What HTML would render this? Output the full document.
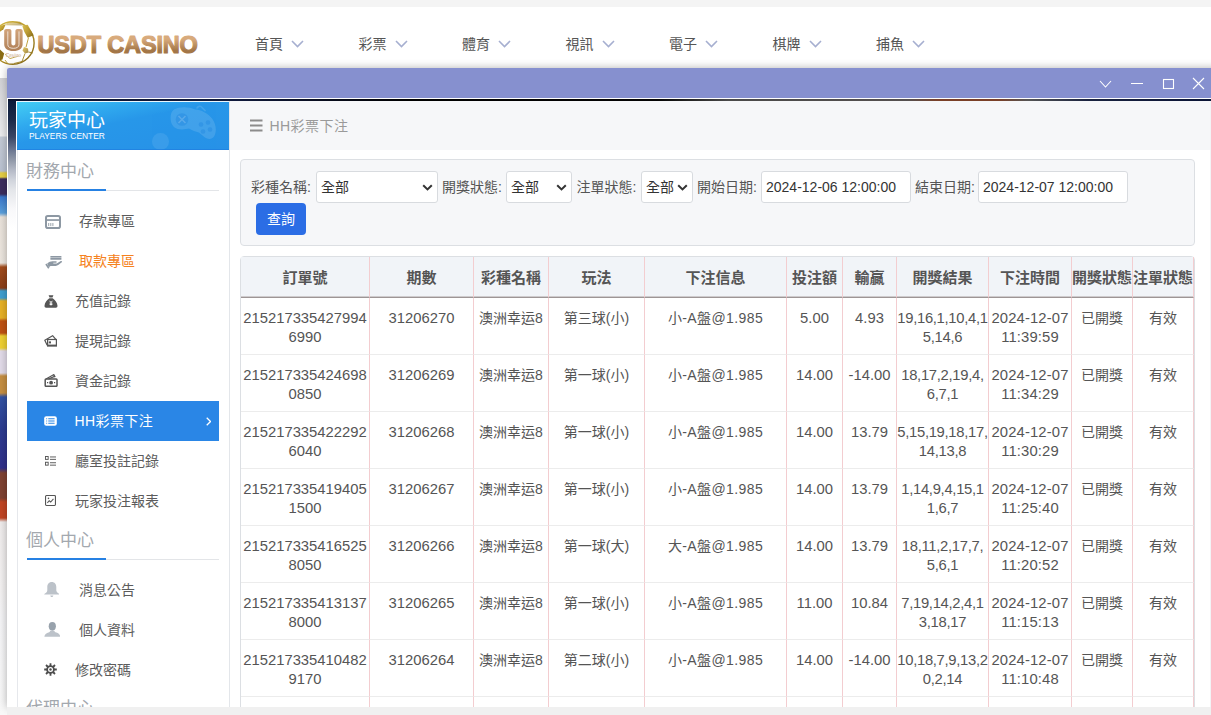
<!DOCTYPE html>
<html lang="zh-Hant">
<head>
<meta charset="utf-8">
<title>USDT CASINO</title>
<style>
*{box-sizing:border-box;margin:0;padding:0}
html,body{width:1211px;height:715px;overflow:hidden}
body{position:relative;background:#f4f4f4;font-family:"Liberation Sans","Noto Sans CJK TC",sans-serif;font-size:14px;color:#555}
/* ---------- page header ---------- */
#hdr{position:absolute;left:0;top:7px;width:1211px;height:71px;background:#fff}
#logo{position:absolute;left:-10px;top:13px;width:46px;height:46px}
#brand{position:absolute;left:36px;top:20px}
#nav{position:absolute;left:255px;top:26px;height:22px;white-space:nowrap}
#nav a{position:absolute;top:0;font-size:14px;line-height:22px;color:#555;text-decoration:none;white-space:nowrap}
#nav svg{position:absolute;left:36px;top:7px}
/* ---------- left page strip ---------- */
#strip{position:absolute;left:0;top:78px;width:8px;height:637px;
 background:linear-gradient(#d2d2d6 0px,#ececee 58px,#c4cad5 59px,#bac2d1 93px,#e6cf45 95px,#e6cf45 99px,#3c2d5e 101px,#3c2d5e 116px,#3b78cc 119px,#5aa0dc 135px,#e9e2da 139px,#ece6df 185px,#a34c1c 189px,#8a3e18 210px,#3f9fd0 213px,#3f9fd0 220px,#e7b125 223px,#e7b125 240px,#bf5213 243px,#bf5213 255px,#efd033 258px,#efd033 270px,#e2dbe9 273px,#e2dbe9 295px,#c68f42 298px,#c68f42 315px,#3353a4 319px,#2c3b90 352px,#31308a 390px,#7f4232 395px,#7f4232 420px,#c24523 424px,#c24523 440px,#efecec 444px,#f3f1f1 510px,#f4f4f6 540px,#f8f8f8 637px)}
/* ---------- modal ---------- */
#modal{position:absolute;left:7px;top:68px;width:1240px;height:639px;background:#fff;border-radius:2px 0 0 0;overflow:hidden;box-shadow:0 0 8px rgba(0,0,0,.3)}
#tbar{position:absolute;left:0;top:0;width:100%;height:30px;background:#8690cf}
#tbar svg{position:absolute;top:0;left:0}
#frame{position:absolute;left:1px;top:31px;width:1239px;height:608px;overflow:hidden;
 background:linear-gradient(#0b1a3a 0px,#1c2a4a 21px,#3a4664 38px,#6b7690 51px,#9098a8 61px,#b4b9c6 71px,#d0d4dc 81px,#e4e6ea 91px,#f8f8fa 110px,#fff 130px)}
#frame:before{content:"";position:absolute;left:0;top:0;width:1204px;height:2px;background:linear-gradient(90deg,#0b1430 0,#101a3c 230px,#000 400px,#050505 650px,#4a4a4a 720px,#555050 900px,#7a4028 930px,#7a4028 990px,#555 1020px,#1a2340 1080px,#0a1436 1203px)}
/* ---------- sidebar ---------- */
#side{position:absolute;left:8px;top:2px;width:214px;height:620px;background:#fff;border-left:1px solid #fff;border-right:1px solid #e3e6ea}
#side:after{content:"";position:absolute;left:0;top:49px;width:1px;height:571px;background:#e6e8ec}
#shead:after{content:"";position:absolute;left:0;bottom:0;width:100%;height:1px;background:#1f7de0;opacity:.7}
#shead{position:absolute;left:0;top:0;width:212px;height:49px;border-top:1px solid #e9f6fd;
 background:linear-gradient(168deg,#43cdf4 0%,#2fa8ee 28%,#2797e9 45%,#2791e7 100%);overflow:hidden}
#shead .t1{position:absolute;left:12px;top:7px;font-size:19px;line-height:24px;color:#fff;white-space:nowrap}
#shead .t2{position:absolute;left:12px;top:29px;font-size:8.400px;line-height:10px;color:#fff;white-space:nowrap;letter-spacing:0;word-spacing:1px}
.sec{position:absolute;left:9px;width:192px;height:40px}
.sec span{position:absolute;left:0;top:1px;font-size:17px;line-height:22px;color:#a3a8ae;white-space:nowrap}
.sec i{position:absolute;left:1px;top:30px;width:192px;height:1px;background:#e3e5e8}
.sec b{position:absolute;left:1px;top:29px;width:79px;height:2px;background:#2681e3}
.mi{position:absolute;left:10px;width:192px;height:40px;line-height:40px;font-size:14px;color:#5c5c5c;white-space:nowrap}
.mi span{position:absolute;left:48px;top:0}
.mi.w span{left:52px}
.mi svg{position:absolute}
.mi.act{background:#2a86e6;color:#fff}
.mi.act span{left:47.500px;letter-spacing:.4px}
.mi.or{color:#f58220}
/* ---------- main ---------- */
#main{position:absolute;left:222px;top:2px;width:1020px;height:620px;background:#fff}
#crumb{position:absolute;left:0;top:0;width:100%;height:49px;background:#f6f7f9}
#crumb span{position:absolute;left:39.500px;top:14px;font-size:14px;line-height:22px;color:#9a9a9a;white-space:nowrap;letter-spacing:.45px}
#crumb svg{position:absolute;left:20px;top:18px}
#filt{position:absolute;left:10px;top:58px;width:955px;height:87px;background:#f6f7f9;border:1px solid #dcdfe3;border-radius:4px}
#filt label{position:absolute;top:16px;font-size:14px;line-height:22px;color:#555;white-space:nowrap}
.sel,.inp{position:absolute;top:11px;height:32px;background:#fff;border:1px solid #d8dbdf;border-radius:3px;font-size:14px;line-height:30px;color:#333;padding-left:4px;white-space:nowrap}
.sel svg{position:absolute;right:4px;top:12px}
#btn{position:absolute;left:15px;top:43px;width:50px;height:32px;background:#2b6de5;border-radius:4px;color:#fff;font-size:14px;line-height:32px;text-align:center}
/* ---------- table ---------- */
#tbl{position:absolute;left:10px;top:155px;width:955px;border-collapse:separate;border-spacing:0;table-layout:fixed;
 border:1px solid #dcdfe3;border-radius:4px 4px 0 0;font-size:14px;color:#555}
#tbl th{height:41px;background:#f1f4f8;font-size:15px;font-weight:bold;color:#555;text-align:center;white-space:nowrap;
 border-bottom:1px solid #9d9595;box-shadow:inset 0 -1px 0 rgba(140,125,125,.35);border-left:1px solid #f3cdd0;padding:2px 0 0 0;overflow:hidden;vertical-align:middle;line-height:20px}
#tbl td{height:57px;text-align:center;vertical-align:top;padding:11px 0 0 0;line-height:19px;white-space:nowrap;
 border-bottom:1px solid #ececec;border-left:1px solid #f3cdd0;overflow:hidden}
#tbl th:first-child,#tbl td:first-child{border-left:none}
#tbl th:last-child,#tbl td:last-child{border-right:1px solid #f3cdd0}
#tbl .n{font-size:14.8px}
#tbl .r{letter-spacing:-.3px}
#tbl .d{letter-spacing:.13px}
#tbl .b{letter-spacing:.4px}
#hbar{position:absolute;left:7px;top:707px;width:1204px;height:8px;background:#f0f0f0}
#vline{position:absolute;left:1210px;top:101px;width:1px;height:606px;background:#f3f4f6}
</style>
</head>
<body>
<div id="hdr">
  <svg id="logo" width="46" height="46" viewBox="0 0 46 46">
    <defs>
      <linearGradient id="gg" x1="0" y1="0" x2="1" y2="1"><stop offset="0" stop-color="#d9bf4a"/><stop offset=".5" stop-color="#b8962a"/><stop offset="1" stop-color="#7d6212"/></linearGradient>
      <linearGradient id="ug" x1="0" y1="0" x2="0" y2="1"><stop offset="0" stop-color="#d2a57c"/><stop offset="1" stop-color="#b08057"/></linearGradient>
    </defs>
    <circle cx="22.800" cy="23" r="21.300" fill="#fff" stroke="url(#gg)" stroke-width="1.400"/>
    <g fill="url(#gg)">
      <path d="M32.200 5.500l5.500 -.8 5.900 10.500 -5.900 2.500 -3.400 -5.900z" opacity=".95"/>
      <path d="M10 6l5.900 -1.700 -2.500 5 -3.400 2.500z"/>
      <path d="M10 29.400l4.200 4.200 -1.700 5.900 -2.500 .8z" fill="#8a6c14"/>
      <path d="M34 27l4 1.500 .5 4 -3.500 1 -2.500 -3z" opacity=".8"/>
      <path d="M17 1.800l13 -.3 2.200 4 -16.300 -.2z" opacity=".55"/>
    </g>
    <g stroke="url(#gg)" stroke-width=".9" fill="none">
      <path d="M38.500 17.700l-2.500 9.500M38.500 32l4.500 1M35 33.500l-3 8M32 41.500l-8 2M29 36l-9 2.500-5 -4.500M15 40l3 4"/>
    </g>
    <g transform="translate(0 1.990) scale(1 .921)"><path d="M14.200 9.500v14.700c0 4.600 3.400 7.400 9.200 7.400s9.200-2.800 9.200-7.400V9.500c0-1.100-.9-2-2-2h-3.200c-1.100 0-2 .9-2 2v13.700c0 1.500-.7 2.200-2 2.200s-2-.7-2-2.200V9.500c0-1.100-.9-2-2-2h-3.200c-1.100 0-2 .9-2 2z" fill="url(#ug)"/>
    <path d="M17.800 10.200v14.200c0 2.700 2.100 4.200 5.600 4.200s5.600-1.500 5.600-4.200V10.200" fill="none" stroke="#fff" stroke-opacity=".8" stroke-width=".9"/></g>
    <text x="23.400" y="37" font-size="4.600" font-weight="bold" font-family="Liberation Sans,sans-serif" fill="#b8895e" text-anchor="middle" stroke="#fff" stroke-width=".25">Casino</text>
  </svg>
  <svg id="brand" width="180" height="40" viewBox="0 0 180 40"><defs><linearGradient id="bg" x1="0" y1="0" x2="0" y2="1"><stop offset=".28" stop-color="#d8aa7c"/><stop offset=".72" stop-color="#a37647"/></linearGradient></defs><text x="1.500" y="25.800" font-family="Liberation Sans,sans-serif" font-weight="bold" font-size="23.500" letter-spacing="-.15" fill="url(#bg)" stroke="url(#bg)" stroke-width="1.200" stroke-linejoin="round">USDT CASINO</text></svg>
  <div id="nav">
    <a style="left:0.0px">首頁<svg width="13" height="8" viewBox="0 0 13 8"><path d="M1 1 L6.5 6.5 L12 1" fill="none" stroke="#a6afd0" stroke-width="1.6"/></svg></a>
    <a style="left:103.5px">彩票<svg width="13" height="8" viewBox="0 0 13 8"><path d="M1 1 L6.5 6.5 L12 1" fill="none" stroke="#a6afd0" stroke-width="1.6"/></svg></a>
    <a style="left:207.0px">體育<svg width="13" height="8" viewBox="0 0 13 8"><path d="M1 1 L6.5 6.5 L12 1" fill="none" stroke="#a6afd0" stroke-width="1.6"/></svg></a>
    <a style="left:310.5px">視訊<svg width="13" height="8" viewBox="0 0 13 8"><path d="M1 1 L6.5 6.5 L12 1" fill="none" stroke="#a6afd0" stroke-width="1.6"/></svg></a>
    <a style="left:414.0px">電子<svg width="13" height="8" viewBox="0 0 13 8"><path d="M1 1 L6.5 6.5 L12 1" fill="none" stroke="#a6afd0" stroke-width="1.6"/></svg></a>
    <a style="left:517.5px">棋牌<svg width="13" height="8" viewBox="0 0 13 8"><path d="M1 1 L6.5 6.5 L12 1" fill="none" stroke="#a6afd0" stroke-width="1.6"/></svg></a>
    <a style="left:621.0px">捕魚<svg width="13" height="8" viewBox="0 0 13 8"><path d="M1 1 L6.5 6.5 L12 1" fill="none" stroke="#a6afd0" stroke-width="1.6"/></svg></a>
  </div>
</div>
<div id="strip"></div>
<div id="modal">
  <div id="tbar"><svg width="1204" height="30" viewBox="0 0 1204 30" fill="none" stroke="#fff" stroke-width="1.1">
      <path d="M1093 13 L1098.5 19 L1104 13"/>
      <path d="M1124 15.5 H1136"/>
      <rect x="1156.5" y="11.5" width="10" height="9"/>
      <path d="M1186 10 L1197 21 M1197 10 L1186 21"/>
    </svg></div>
  <div id="frame">
    <div id="side">
      <div id="shead">
        <svg width="212" height="49" viewBox="0 0 212 49" style="position:absolute;left:0;top:0">
          <g transform="translate(-1 -1.500)">
          <g fill="#fff" opacity=".12">
            <path d="M158 9c6-3 14-3 21 0 6 0 13 4 17 9 4 5 5 13 2 18-2 3-6 3-9 1l-6-5c-3-1-7-2-10-4l-7 1c-6 0-10-3-11-8-1-5 0-10 3-12z"/>
            <path d="M180 8c1-3 4-4 6-2l4 4-1 1-4-4c-1-1-3 0-3 1z"/>
            <circle cx="144.500" cy="41" r="8.500" opacity=".7"/>
          </g>
          <g fill="#2a8fe4" opacity=".6">
            <circle cx="166" cy="19" r="6.3"/>
            <circle cx="185" cy="24" r="2.3"/><circle cx="192" cy="22" r="2.3"/><circle cx="187" cy="31" r="2.3"/><circle cx="194" cy="29" r="2.3"/>
          </g>
          <path d="M162.5 15.5l7 7m0-7l-7 7" stroke="#fff" stroke-opacity=".18" stroke-width="1.6"/>
        </g>
        </svg>
        <div class="t1">玩家中心</div>
        <div class="t2">PLAYERS CENTER</div>
      </div>
      <div class="sec" style="top:59px"><span>財務中心</span><i></i><b></b></div>
      <div class="mi w" style="top:100px"><svg style="left:18px;top:14px" width="16" height="14" viewBox="0 0 16 14"><rect x="1" y="1" width="14" height="12" rx="1.800" fill="none" stroke="#8d98a3" stroke-width="2"/><rect x="1" y="4.200" width="14" height="1.700" fill="#8d98a3"/><path d="M3.700 8v3.100M5.800 8v3.100M7.900 8v3.100" stroke="#8d98a3" stroke-width=".9"/></svg><span>存款專區</span></div>
      <div class="mi w or" style="top:140px"><svg style="left:17px;top:15px" width="19" height="13" viewBox="0 0 19 13"><path d="M6.400 0h11v1.600h-11z M6.400 2.100h11v1.700h-11z" fill="#8d98a3"/><path d="M6.400 1.600h11v.5h-11z" fill="#8d98a3" opacity=".55"/><path d="M3.200 7.600c1.700-1.700 3.400-2.400 5.200-2.400h3.600c1 0 1 1.500 0 1.600H9.300v.7h3.400l4.100-2.400c1-.5 1.700.5 1 1.200-2.200 1.900-4.200 3.300-6.100 3.700H6.500L4.800 11.300z" fill="#8d98a3"/><path d="M1.300 8.600l1.400-1 2.800 4.200-1.400 1z" fill="#8d98a3"/></svg><span>取款專區</span></div>
      <div class="mi " style="top:180px"><svg style="left:17px;top:14px" width="14" height="13" viewBox="0 0 14 13"><path d="M4.600 .3h4.800l-.9 2.300H5.500z" fill="#555"/><path d="M5.300 3.200h3.400c2.400 1.500 4.600 4.600 4.800 7.600.1 1.300-.6 1.900-1.700 1.900H2.200C1.100 12.700.4 12.100.5 10.800.700 7.800 2.900 4.700 5.300 3.200z" fill="#555"/><path d="M5.600 5.800L7 7.500l1.400-1.700M7 7.500v3M5.600 8.200h2.800M5.600 9.500h2.800" stroke="#fff" stroke-width=".9" fill="none"/></svg><span>充值記錄</span></div>
      <div class="mi " style="top:220px"><svg style="left:17px;top:14px" width="14" height="12" viewBox="0 0 14 12"><path d="M3.200 10.300L.8 5.200 8.600 .7l3.200 3.700" fill="none" stroke="#555" stroke-width="1.200" stroke-linejoin="round"/><rect x="3.600" y="4.500" width="8.800" height="6.300" fill="#fff" stroke="#555" stroke-width="1.200"/><rect x="3" y="9.600" width="10" height="1.800" fill="#555"/><rect x="4.800" y="6.400" width="2.200" height="2" fill="#555"/></svg><span>提現記錄</span></div>
      <div class="mi " style="top:260px"><svg style="left:17px;top:13px" width="14" height="13" viewBox="0 0 14 13"><path d="M2 5L9.800.6l1.400 2.500M4.500 5l6-2.600" fill="none" stroke="#555" stroke-width="1.200"/><rect x="1.200" y="5" width="11.800" height="7.300" rx=".8" fill="none" stroke="#555" stroke-width="1.500"/><circle cx="7.100" cy="8.700" r="1.900" fill="#555"/><path d="M3 8.700h1.200M10 8.700h1.200" stroke="#555" stroke-width="1.200"/></svg><span>資金記錄</span></div>
      <div class="mi act" style="top:300px"><svg style="left:17px;top:15px" width="13" height="10" viewBox="0 0 14 11" preserveAspectRatio="none"><rect x=".2" y=".2" width="13.600" height="10.600" rx="2.200" fill="#fff"/><path d="M4.600 3.100h6.800M4.600 5.500h6.800M4.600 7.900h6.800" stroke="#2a86e6" stroke-width="1.200"/><path d="M2.400 3.100h1M2.400 5.500h1M2.400 7.900h1" stroke="#2a86e6" stroke-width="1.200"/></svg><span>HH彩票下注</span><svg style="left:179px;top:15.500px" width="5.400" height="9" viewBox="0 0 6 10"><path d="M.8 .8L5 5 .8 9.200" fill="none" stroke="#fff" stroke-width="1.400"/></svg></div>
      <div class="mi " style="top:340px"><svg style="left:17.500px;top:14.500px" width="11.800" height="10.600" viewBox="0 0 13 11" preserveAspectRatio="none"><rect x=".5" y=".5" width="3" height="3" fill="none" stroke="#555" stroke-width="1"/><rect x=".5" y="6.500" width="3" height="3" fill="none" stroke="#555" stroke-width="1"/><path d="M5.500 1h7M5.500 3.500h7M5.500 7h7M5.500 9.500h7" stroke="#555" stroke-width="1"/></svg><span>廳室投註記錄</span></div>
      <div class="mi " style="top:380px"><svg style="left:18px;top:14px" width="11" height="11" viewBox="0 0 12 12"><rect x=".6" y=".6" width="10.800" height="10.800" rx="1" fill="none" stroke="#555" stroke-width="1.200"/><path d="M2.600 8.600l2-2.300 1.600 1.300 3-3.400" fill="none" stroke="#555" stroke-width="1.100"/><circle cx="3.800" cy="3.600" r=".9" fill="#555"/></svg><span>玩家投注報表</span></div>
      <div class="sec" style="top:428px"><span>個人中心</span><i></i><b></b></div>
      <div class="mi w" style="top:469px"><svg style="left:16.700px;top:12px" width="15.600" height="15.200" viewBox="0 0 17 16" preserveAspectRatio="none"><path d="M8.500 0C5.400 0 3.600 2.400 3.600 5.200v3.400C3.600 10.300 2 11.600.3 12.600v.6h16.400v-.6c-1.700-1-3.300-2.300-3.300-4V5.200C13.400 2.400 11.600 0 8.500 0z" fill="#bcc2c9"/><path d="M6.800 14.200h3.400c-.3 1.100-1 1.600-1.700 1.600s-1.400-.5-1.700-1.600z" fill="#bcc2c9"/></svg><span>消息公告</span></div>
      <div class="mi w" style="top:509px"><svg style="left:16.700px;top:12px" width="16.600" height="15.200" viewBox="0 0 18 16" preserveAspectRatio="none"><ellipse cx="9" cy="4.600" rx="3.900" ry="4.500" fill="#98a2ac"/><path d="M.4 15.600c.2-2.600 1.800-3.800 5.200-4.800.8-.3 1.200-.9 1.200-1.500h4.400c0 .6.400 1.200 1.200 1.500 3.400 1 5 2.200 5.200 4.800z" fill="#bcc2c9"/></svg><span>個人資料</span></div>
      <div class="mi " style="top:549px"><svg style="left:17px;top:12.500px" width="13" height="13" viewBox="0 0 13 13"><g stroke="#4d4d4d" stroke-width="1.800"><path d="M6.500 .2v12.600M.2 6.500h12.600M2 2l9 9M11 2l-9 9"/></g><circle cx="6.500" cy="6.500" r="4.300" fill="#4d4d4d"/><circle cx="6.500" cy="6.500" r="2.500" fill="#fff"/><circle cx="6.500" cy="6.500" r="1.200" fill="#4d4d4d"/></svg><span>修改密碼</span></div>
      <div class="sec" style="top:596px"><span>代理中心</span><i></i><b></b></div>
    </div>
    <div id="main">
      <div id="crumb"><svg width="13" height="13" viewBox="0 0 13 13"><path d="M0 1.500h12.500M0 6.500h12.500M0 11.500h12.500" stroke="#8c8c8c" stroke-width="2"/></svg><span>HH彩票下注</span></div>
      <div id="filt">
        <label style="left:10px">彩種名稱:</label><div class="sel" style="left:75px;width:122px">全部<svg width="11" height="7" viewBox="0 0 11 7"><path d="M1.200 1.200L5.500 5.400 9.800 1.200" fill="none" stroke="#333" stroke-width="2"/></svg></div>
        <label style="left:201px">開獎狀態:</label><div class="sel" style="left:265px;width:66px">全部<svg width="11" height="7" viewBox="0 0 11 7"><path d="M1.200 1.200L5.500 5.400 9.800 1.200" fill="none" stroke="#333" stroke-width="2"/></svg></div>
        <label style="left:335.500px">注單狀態:</label><div class="sel" style="left:400px;width:52px">全部<svg width="11" height="7" viewBox="0 0 11 7"><path d="M1.200 1.200L5.500 5.400 9.800 1.200" fill="none" stroke="#333" stroke-width="2"/></svg></div>
        <label style="left:456px">開始日期:</label><div class="inp" style="left:520px;width:150px">2024-12-06 12:00:00</div>
        <label style="left:674px">結束日期:</label><div class="inp" style="left:737px;width:150px">2024-12-07 12:00:00</div>
        <div id="btn">查詢</div>
      </div>
      <table id="tbl"><colgroup><col style="width:128px"><col style="width:104px"><col style="width:75px"><col style="width:96px"><col style="width:142px"><col style="width:56px"><col style="width:54px"><col style="width:92px"><col style="width:83px"><col style="width:61px"><col style="width:62px"></colgroup>
        <thead><tr><th>訂單號</th><th>期數</th><th>彩種名稱</th><th>玩法</th><th>下注信息</th><th>投注額</th><th>輸贏</th><th>開獎結果</th><th>下注時間</th><th>開獎狀態</th><th>注單狀態</th></tr></thead>
        <tbody>
        <tr><td class="n">215217335427994<br>6990</td><td class="n">31206270</td><td>澳洲幸运8</td><td>第三球(小)</td><td class="b">小-A盤@1.985</td><td class="n">5.00</td><td class="n">4.93</td><td class="n r">19,16,1,10,4,1<br>5,14,6</td><td class="n d">2024-12-07<br>11:39:59</td><td>已開獎</td><td>有效</td></tr>
        <tr><td class="n">215217335424698<br>0850</td><td class="n">31206269</td><td>澳洲幸运8</td><td>第一球(小)</td><td class="b">小-A盤@1.985</td><td class="n">14.00</td><td class="n">-14.00</td><td class="n r">18,17,2,19,4,<br>6,7,1</td><td class="n d">2024-12-07<br>11:34:29</td><td>已開獎</td><td>有效</td></tr>
        <tr><td class="n">215217335422292<br>6040</td><td class="n">31206268</td><td>澳洲幸运8</td><td>第一球(小)</td><td class="b">小-A盤@1.985</td><td class="n">14.00</td><td class="n">13.79</td><td class="n r">5,15,19,18,17,<br>14,13,8</td><td class="n d">2024-12-07<br>11:30:29</td><td>已開獎</td><td>有效</td></tr>
        <tr><td class="n">215217335419405<br>1500</td><td class="n">31206267</td><td>澳洲幸运8</td><td>第一球(小)</td><td class="b">小-A盤@1.985</td><td class="n">14.00</td><td class="n">13.79</td><td class="n r">1,14,9,4,15,1<br>1,6,7</td><td class="n d">2024-12-07<br>11:25:40</td><td>已開獎</td><td>有效</td></tr>
        <tr><td class="n">215217335416525<br>8050</td><td class="n">31206266</td><td>澳洲幸运8</td><td>第一球(大)</td><td class="b">大-A盤@1.985</td><td class="n">14.00</td><td class="n">13.79</td><td class="n r">18,11,2,17,7,<br>5,6,1</td><td class="n d">2024-12-07<br>11:20:52</td><td>已開獎</td><td>有效</td></tr>
        <tr><td class="n">215217335413137<br>8000</td><td class="n">31206265</td><td>澳洲幸运8</td><td>第一球(小)</td><td class="b">小-A盤@1.985</td><td class="n">11.00</td><td class="n">10.84</td><td class="n r">7,19,14,2,4,1<br>3,18,17</td><td class="n d">2024-12-07<br>11:15:13</td><td>已開獎</td><td>有效</td></tr>
        <tr><td class="n">215217335410482<br>9170</td><td class="n">31206264</td><td>澳洲幸运8</td><td>第二球(小)</td><td class="b">小-A盤@1.985</td><td class="n">14.00</td><td class="n">-14.00</td><td class="n r">10,18,7,9,13,2<br>0,2,14</td><td class="n d">2024-12-07<br>11:10:48</td><td>已開獎</td><td>有效</td></tr>
        <tr><td class="n">215217335407591<br>2680</td><td class="n">31206263</td><td>澳洲幸运8</td><td>第一球(小)</td><td class="b">小-A盤@1.985</td><td class="n">14.00</td><td class="n">13.79</td><td class="n r">3,12,8,16,20,<br>1,9,5</td><td class="n d">2024-12-07<br>11:05:31</td><td>已開獎</td><td>有效</td></tr>
        </tbody>
      </table>
    </div>
  </div>
</div>
<div id="hbar"></div>
<div id="vline"></div>
</body>
</html>
